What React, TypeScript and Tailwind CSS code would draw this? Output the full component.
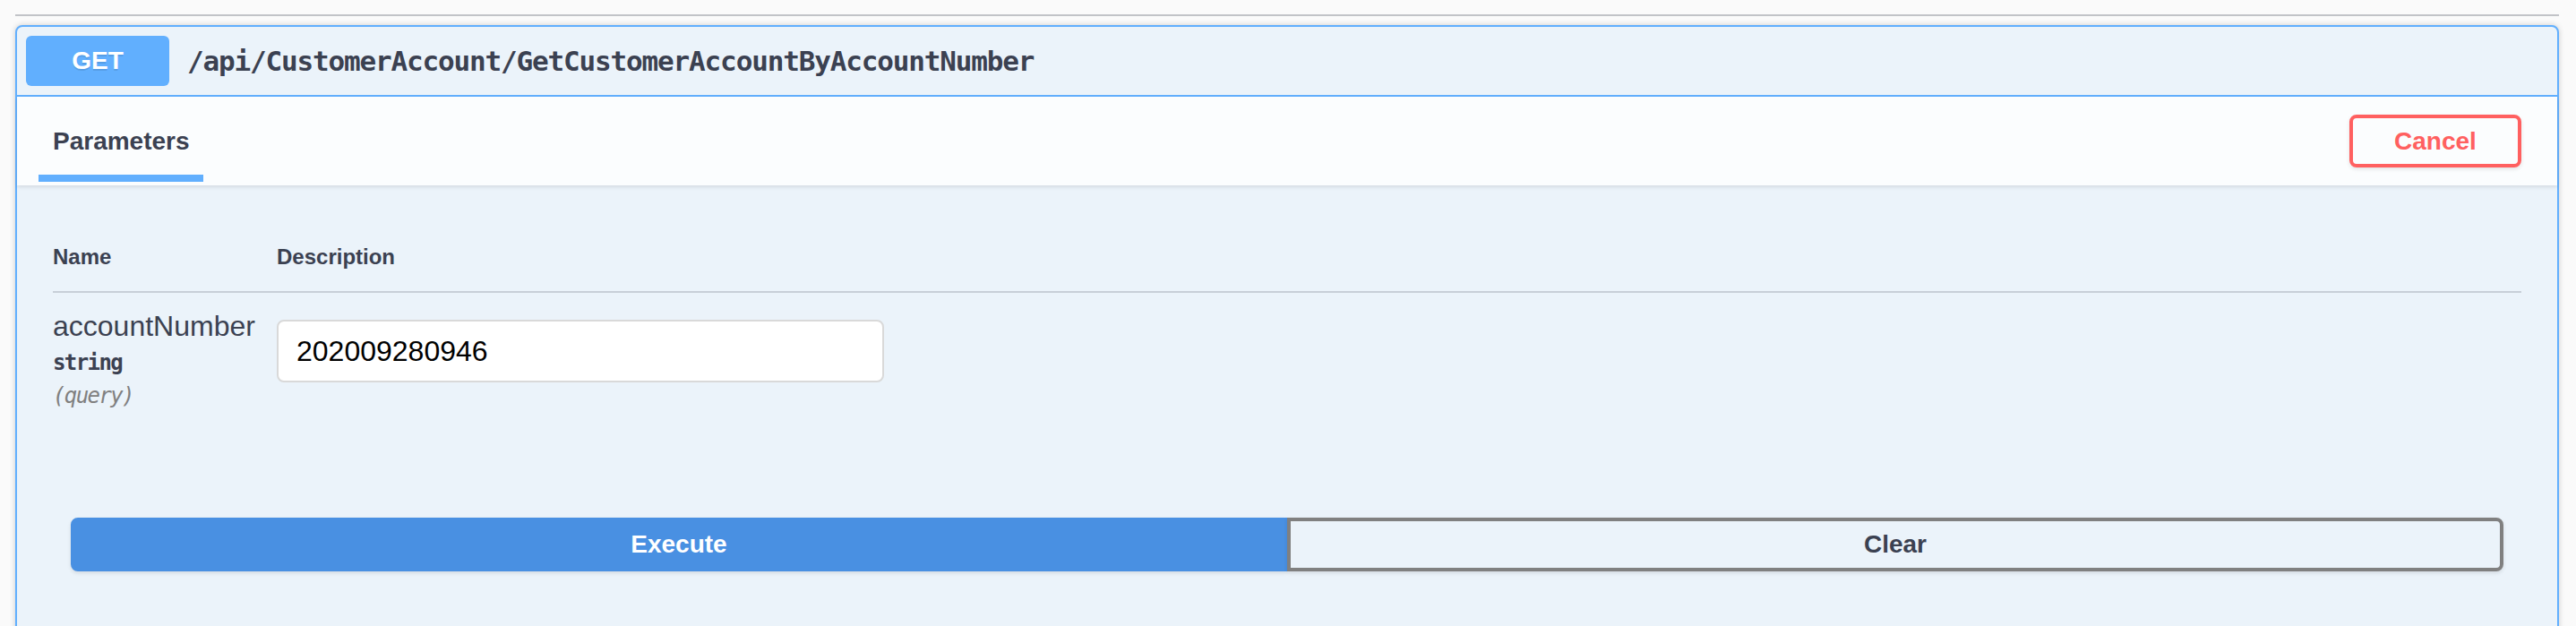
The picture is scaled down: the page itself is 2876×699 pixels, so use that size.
const sans = "font-['Liberation_Sans',Arial,sans-serif]";
const mono = "font-['DejaVu_Sans_Mono',monospace]";

function MethodBadge() {
  return (
    <div
      className={`flex h-[56px] w-[160px] items-center justify-center rounded-[6px] bg-[#61affe] text-[28px] font-bold text-white [text-shadow:0_2px_0_rgba(0,0,0,0.1)] ${sans}`}
    >
      GET
    </div>
  );
}

function ParamRow() {
  return (
    <div className="flex pt-[19px] pb-[20px]">
      <div className="w-[250px] shrink-0">
        <div className={`text-[32px] leading-[36px] text-[#3b4151] ${sans}`}>accountNumber</div>
        <div className={`py-[10px] text-[24px] leading-[27px] font-bold tracking-[-1.6px] text-[#3b4151] ${mono}`}>
          string
        </div>
        <div className={`text-[24px] leading-[27px] italic tracking-[-1.6px] text-[#808080] ${mono}`}>(query)</div>
      </div>
      <div className="pt-[11px]">
        <input
          defaultValue="202009280946"
          className={`h-[70px] w-[678px] rounded-[8px] border-2 border-[#d9d9d9] bg-white px-[20px] text-[32px] text-black outline-none ${sans}`}
        />
      </div>
    </div>
  );
}

export default function App() {
  return (
    <div className={`min-h-screen bg-[#fafafa] pt-[16px] pl-[17px] pr-[19px] ${sans}`}>
      <div className="h-[2px] bg-[#c1c3c7]" />

      <div className="mt-[10px] rounded-[8px] border-2 border-[#61affe] bg-[#ebf3fa] shadow-[0_0_6px_rgba(0,0,0,0.19)]">
        {/* summary */}
        <div className="flex items-center border-b-2 border-[#61affe] p-[10px]">
          <MethodBadge />
          <span className={`pl-[20px] text-[31px] font-bold tracking-[-1.16px] text-[#3b4151] ${mono}`}>
            /api/CustomerAccount/GetCustomerAccountByAccountNumber
          </span>
        </div>

        {/* section header */}
        <div className="relative flex h-[99px] items-center justify-between bg-white/80 px-[40px] shadow-[0_2px_4px_rgba(0,0,0,0.1)]">
          <h4 className="text-[28px] font-bold text-[#3b4151]">Parameters</h4>
          <span className="absolute bottom-[4px] left-[24px] h-[8px] w-[184px] bg-[#61affe]" />
          <button className="h-[59px] w-[192px] rounded-[8px] border-4 border-[#ff6060] bg-transparent text-[28px] font-bold text-[#ff6060] shadow-[0_2px_4px_rgba(0,0,0,0.1)]">
            Cancel
          </button>
        </div>

        {/* parameters table */}
        <div className="px-[40px] pt-[42px]">
          <div className="flex border-b-2 border-[#c8cfd8] py-[24px] text-[24px] leading-[28px] font-bold text-[#3b4151]">
            <div className="w-[250px]">Name</div>
            <div>Description</div>
          </div>
          <ParamRow />
        </div>

        {/* execute / clear */}
        <div className="flex px-[60px] pt-[102px] pb-[80px]">
          <button className="h-[60px] flex-1 rounded-l-[8px] border-4 border-[#4990e2] bg-[#4990e2] text-[28px] font-bold text-white shadow-[0_2px_4px_rgba(0,0,0,0.1)]">
            Execute
          </button>
          <button className="h-[60px] flex-1 rounded-r-[8px] border-4 border-[#808080] bg-transparent text-[28px] font-bold text-[#3b4151] shadow-[0_2px_4px_rgba(0,0,0,0.1)]">
            Clear
          </button>
        </div>
      </div>
    </div>
  );
}
